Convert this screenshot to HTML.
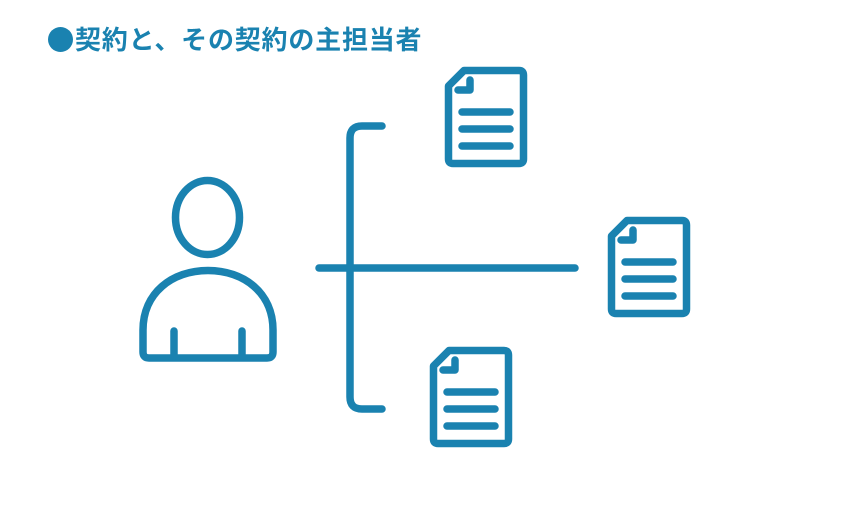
<!DOCTYPE html>
<html><head><meta charset="utf-8"><style>
html,body{margin:0;padding:0;background:#fff;width:850px;height:506px;overflow:hidden}
.t{position:absolute;left:75px;top:23px;font-family:"Liberation Sans","Noto Sans CJK JP",sans-serif;font-weight:bold;font-size:26px;line-height:34px;color:#1a82b0;letter-spacing:0.8px;white-space:nowrap}
.dot{position:absolute;left:48px;top:27px;width:25px;height:25px;border-radius:50%;background:#1a82b0}
svg{position:absolute;left:0;top:0}
</style></head><body>
<div class="dot"></div>
<div class="t">契約と、その契約の主担当者</div>
<svg width="850" height="506" viewBox="0 0 850 506" fill="none" stroke="#1a82b0" stroke-width="7.5" stroke-linecap="round" stroke-linejoin="round">
<defs>
<g id="doc">
<path d="M448.5,86 L464,70.5 H519 Q523.5,70.5 523.5,75 V159 Q523.5,163.5 519,163.5 H453 Q448.5,163.5 448.5,159 Z"/>
<path d="M470,80 V90 H458"/>
<path d="M462,112 H510 M462,129 H510 M462,146 H510"/>
</g>
</defs>
<use href="#doc"/>
<use href="#doc" transform="translate(163,150)"/>
<use href="#doc" transform="translate(-15,280)"/>
<ellipse cx="207.5" cy="217.5" rx="32" ry="37"/>
<path d="M143,330 C143,293 172,270.5 208,270.5 C244,270.5 273,293 273,330 V352 Q273,358 267,358 H149 Q143,358 143,352 Z"/>
<path d="M174,331 V356 M242,331 V356"/>
<path d="M382,126 H362 Q350,126 350,138 V397 Q350,409 362,409 H382"/>
<path d="M319,268 H575"/>
</svg>
</body></html>
